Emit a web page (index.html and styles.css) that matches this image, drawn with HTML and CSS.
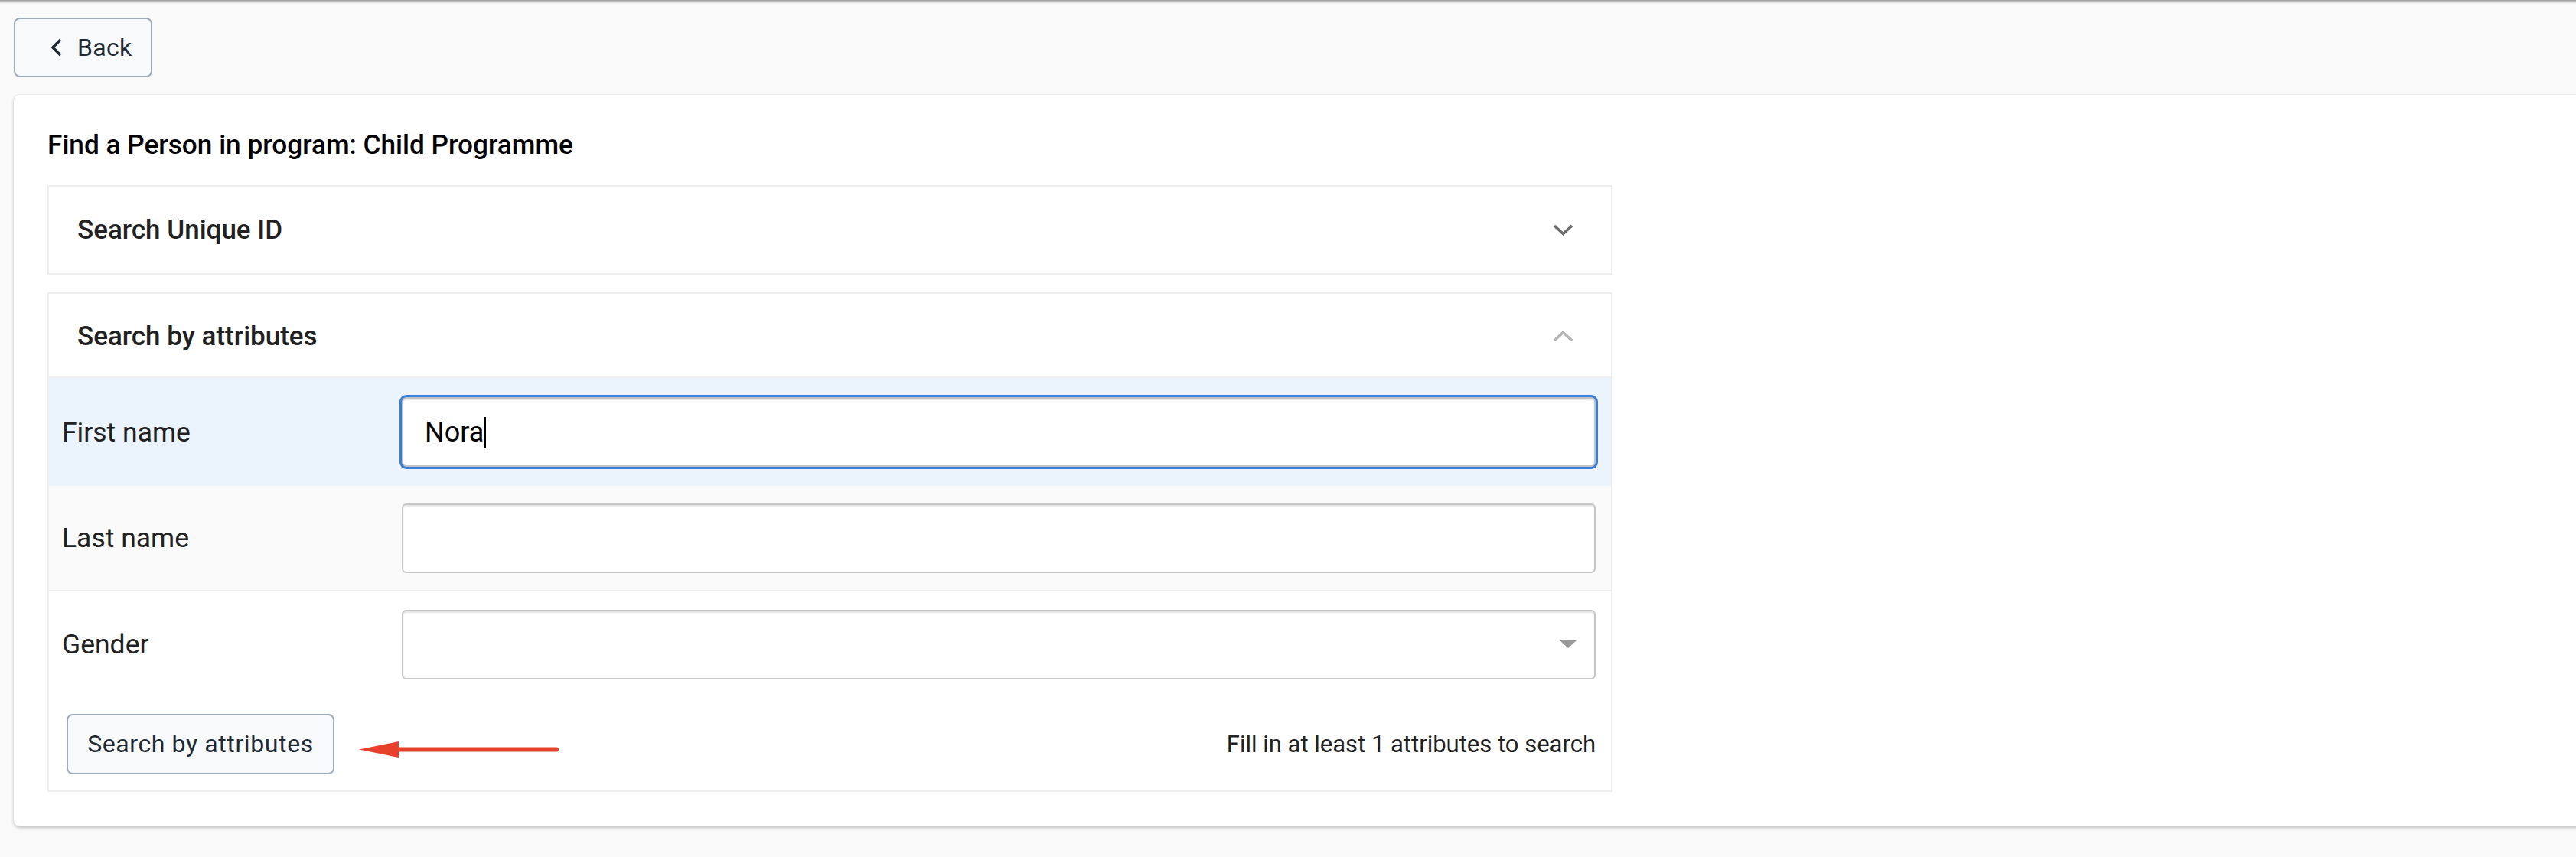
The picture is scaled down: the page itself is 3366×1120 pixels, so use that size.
FILE: index.html
```html
<!DOCTYPE html>
<html lang="en">
<head>
<meta charset="utf-8">
<title>Find a Person</title>
<link rel="stylesheet" href="styles.css">
</head>
<body>
<div class="topshadow"></div>
<div class="page">
  <button class="btn back-btn" type="button">
    <svg class="back-icon" width="15" height="24" viewBox="0 0 15 24"><polyline points="13,2 3,12 13,22" fill="none" stroke="#212934" stroke-width="3.6"/></svg>
    <span>Back</span>
  </button>
  <div class="card">
    <h1 class="title">Find a Person in program: Child Programme</h1>
    <section class="panel">
      <div class="panel-head">
        <span>Search Unique ID</span>
        <svg class="chev" width="27" height="15" viewBox="0 0 27 15"><polyline points="2,2 13.5,12.5 25,2" fill="none" stroke="#6e6e6e" stroke-width="3.6"/></svg>
      </div>
    </section>
    <section class="panel">
      <div class="panel-head open">
        <span>Search by attributes</span>
        <svg class="chev" width="27" height="15" viewBox="0 0 27 15"><polyline points="2,13 13.5,2.5 25,13" fill="none" stroke="#b4b4b4" stroke-width="3.6"/></svg>
      </div>
      <div class="row row-active">
        <label class="row-label">First name</label>
        <div class="field field-focus"><span class="field-text">Nora</span><span class="caret"></span></div>
      </div>
      <div class="row row-alt">
        <label class="row-label">Last name</label>
        <div class="field"></div>
      </div>
      <div class="row">
        <label class="row-label">Gender</label>
        <div class="field field-select"><span class="tri"></span></div>
      </div>
      <div class="actions">
        <button class="btn search-btn" type="button">Search by attributes</button>
        <svg class="arrow" width="262" height="22" viewBox="0 0 262 22"><polygon points="0,10.5 52,0 52,21" fill="#e8412b"/><line x1="48" y1="10.5" x2="258" y2="10.5" stroke="#e8412b" stroke-width="6" stroke-linecap="round"/></svg>
        <span class="hint">Fill in at least 1 attributes to search</span>
      </div>
    </section>
  </div>
</div>
</body>
</html>
```
FILE: styles.css
```css
html, body {
  margin: 0;
  padding: 0;
}
body {
  background: #f9f9f9;
  font-family: Roboto, "Noto Sans", sans-serif;
  color: #212121;
  overflow: hidden;
  width: 3366px;
  height: 1120px;
}
.topshadow {
  height: 6px;
  background: linear-gradient(to bottom, #979797 0, #c9c9c9 2px, #efefef 4px, #f9f9f9 6px);
}
.page {
  padding: 17px 0 0 18px;
}
.btn {
  font-family: Roboto, "Noto Sans", sans-serif;
  background: #f8f9fb;
  border: 2px solid #a0abb8;
  border-radius: 8px;
  color: #212934;
  cursor: pointer;
  box-sizing: border-box;
}
.back-btn {
  display: flex;
  align-items: center;
  width: 181px;
  height: 78px;
  padding: 0 0 0 46px;
  font-size: 32px;
  letter-spacing: 0.3px;
}
.back-icon {
  margin-right: 20px;
  flex: none;
}
.card {
  margin: 23px -40px 0 0;
  background: #fff;
  border-radius: 8px;
  box-shadow: 0 2px 4px rgba(0, 0, 0, 0.22), 0 0 2px rgba(0, 0, 0, 0.06);
  padding: 45px 0 45px 44px;
}
.title {
  margin: 0 0 33px;
  font-size: 35.2px;
  line-height: 40px;
  font-weight: 500;
  color: #000;
}
.panel {
  width: 2045px;
  box-sizing: border-box;
  border: 2px solid #eeeeee;
  background: #fff;
}
.panel + .panel {
  margin-top: 23px;
}
.panel-head {
  height: 113px;
  display: flex;
  align-items: center;
  justify-content: space-between;
  padding: 0 49px 0 37px;
  font-size: 35px;
  font-weight: 500;
  color: #212121;
}
.panel-head.open {
  height: 108px;
  padding-top: 2px;
  box-sizing: border-box;
  height: 110px;
  border-bottom: 2px solid #eeeeee;
}
.row {
  display: flex;
  align-items: center;
  height: 138px;
  padding: 0 20px 0 17px;
}
.row-active {
  height: 141px;
  background: #ebf3fc;
}
.row-alt {
  height: 136px;
  background: #fafafa;
  border-bottom: 2px solid #eeeeee;
}
.row-label {
  width: 444px;
  flex: none;
  font-size: 35.5px;
  color: #212121;
}
.field {
  flex: 1;
  height: 91px;
  box-sizing: border-box;
  border: 2px solid #c6c6c6;
  border-radius: 6px;
  background: #fff;
  box-shadow: inset 0 2px 2px rgba(0, 0, 0, 0.1);
  display: flex;
  align-items: center;
  padding: 0 28px;
}
.field-focus {
  border-color: #c2c2c2;
  box-shadow: 0 0 0 3px #3a7dd6, inset 0 2px 2px rgba(0, 0, 0, 0.1);
}
.field-text {
  font-size: 36px;
  color: #000;
}
.caret {
  width: 2px;
  height: 40px;
  margin-left: 1px;
  background: #000;
}
.field-select {
  justify-content: flex-end;
  padding-right: 23px;
}
.tri {
  width: 0;
  height: 0;
  border-left: 11px solid transparent;
  border-right: 11px solid transparent;
  border-top: 10px solid #9a9a9a;
}
.actions {
  display: flex;
  align-items: center;
  height: 122px;
  padding: 0 20px 0 23px;
}
.search-btn {
  width: 350px;
  height: 79px;
  font-size: 32px;
  letter-spacing: 0.6px;
  padding: 0;
}
.arrow {
  margin: 15px 0 0 32px;
  flex: none;
}
.hint {
  margin-left: auto;
  font-size: 31px;
  color: #212121;
}
```
